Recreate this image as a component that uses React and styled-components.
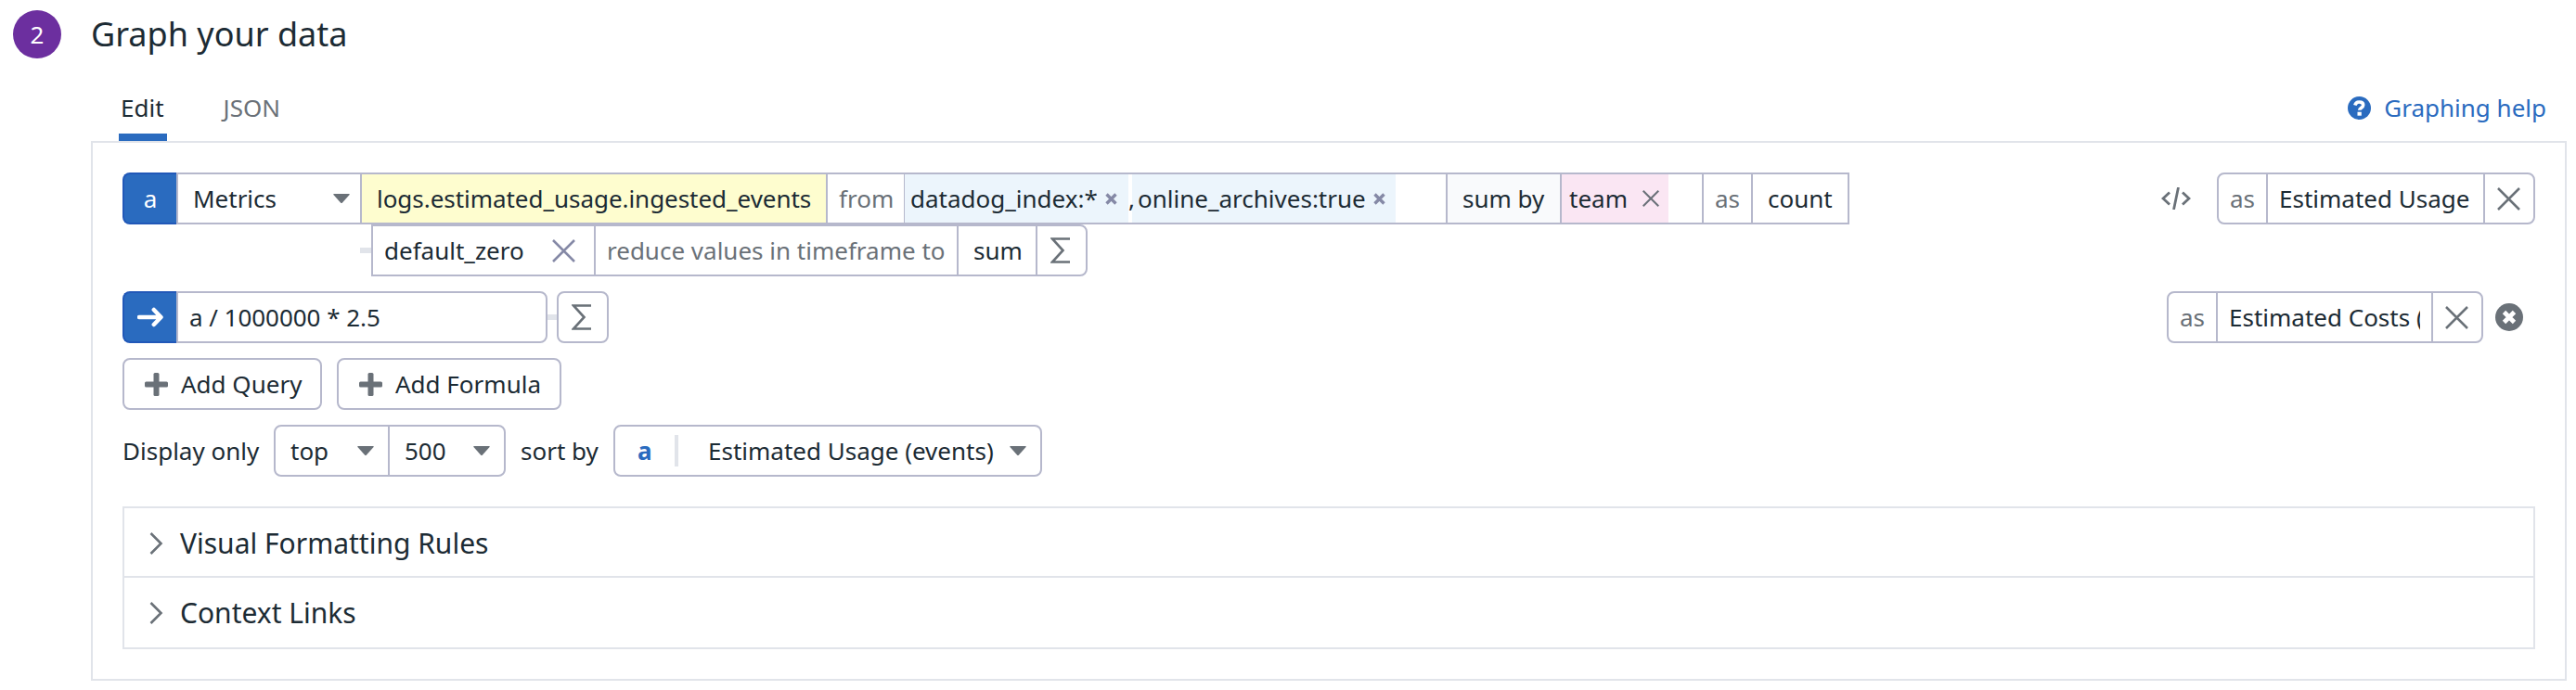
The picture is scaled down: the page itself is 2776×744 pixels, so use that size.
import React from "react";
import styled, { createGlobalStyle, css } from "styled-components";

const ink = "#1c2b34";
const muted = "#6a7178";
const line = "#b6b8cc";
const soft = "#e1e4ea";
const blue = "#2a6bbf";

const Global = createGlobalStyle`
  *, *::before, *::after { box-sizing: border-box; }
  body {
    margin: 0;
    background: #fff;
    color: ${ink};
    font: 26px/36px "Noto Sans", sans-serif;
    overflow: hidden;
  }
  svg { display: block; flex: none; }
`;

const Page = styled.main`
  width: 2776px;
  height: 744px;
  padding: 11px 10px 0 14px;
`;
const Heading = styled.header`
  display: flex;
  align-items: center;
  gap: 32px;
  height: 52px;
`;
const Step = styled.span`
  width: 52px;
  height: 52px;
  border-radius: 50%;
  background: #6c2f9f;
  color: #fff;
  text-align: center;
  line-height: 52px;
`;
const Title = styled.h1`
  margin: 0;
  font-size: 36px;
  line-height: 50px;
  font-weight: 400;
`;
const TabBar = styled.nav`
  display: flex;
  align-items: stretch;
  height: 89px;
  margin-left: 114px;
`;
const Tab = styled.span`
  display: flex;
  align-items: center;
  padding: 25px 3px 0 2px;
  margin-right: 59px;
  color: ${(p) => (p.$active ? ink : muted)};
  border-bottom: 8px solid ${(p) => (p.$active ? blue : "transparent")};
`;
const Help = styled.a`
  display: flex;
  align-items: center;
  gap: 14px;
  margin-left: auto;
  padding: 17px 22px 0 0;
  color: ${blue};
`;
const Panel = styled.section`
  width: 2668px;
  height: 582px;
  margin-left: 84px;
  padding: 32px;
  border: 2px solid ${soft};
`;
const Line = styled.div`
  display: flex;
  align-items: center;
  height: 56px;
  margin-top: ${(p) => p.$top || 0}px;
  padding-left: ${(p) => p.$indent || 0}px;
`;
const Push = styled.div`
  display: flex;
  align-items: center;
  margin-left: auto;
  padding-right: ${(p) => p.$end || 0}px;
`;
const Group = styled.div`
  display: flex;
  height: 56px;
  width: ${(p) => p.$w}px;
  border: 2px solid ${line};
  border-radius: ${(p) => p.$radius || "8px"};
  margin-left: ${(p) => p.$gap || 0}px;
`;
const Cell = styled.div`
  display: flex;
  align-items: center;
  flex: none;
  width: ${(p) => p.$w}px;
  padding-left: ${(p) => p.$pad || 0}px;
  color: ${(p) => (p.$muted ? muted : ink)};
  background: ${(p) => p.$bg || "transparent"};
  border-right: ${(p) => (p.$last ? 0 : p.$thin ? 1 : 2)}px solid ${line};
  white-space: pre;
  ${(p) => p.$tight && css`letter-spacing: -0.04px;`}
`;
const Chip = styled.span`
  display: flex;
  align-items: center;
  align-self: stretch;
  flex: none;
  width: ${(p) => p.$w}px;
  padding-left: ${(p) => p.$pad}px;
  background: ${(p) => p.$bg};
`;
const Comma = styled.span`
  width: 4px;
  z-index: 1;
`;
const Badge = styled.div`
  display: flex;
  align-items: center;
  justify-content: center;
  width: 58px;
  height: 56px;
  border: 2px solid #2158b8;
  border-right: 0;
  border-radius: 8px 0 0 8px;
  background: ${blue};
  color: #fff;
`;
const Label = styled.span`
  flex: none;
  width: ${(p) => p.$w}px;
  overflow: hidden;
  white-space: nowrap;
`;
const Link = styled.span`
  width: ${(p) => p.$w}px;
  height: 6px;
  background: ${soft};
`;
const Button = styled.button`
  display: flex;
  align-items: center;
  gap: 14px;
  width: ${(p) => p.$w}px;
  height: 56px;
  margin: 0 16px 0 0;
  padding: 0 0 0 22px;
  border: 2px solid ${line};
  border-radius: 8px;
  background: #fff;
  color: ${ink};
  font: inherit;
  white-space: nowrap;
`;
const Separator = styled.span`
  width: 4px;
  height: 34px;
  margin-right: 32px;
  background: ${soft};
`;
const Key = styled.b`
  width: 40px;
  color: ${blue};
`;
const Accordion = styled.div`
  margin-top: 32px;
  width: 2600px;
  border: 2px solid ${soft};
`;
const Section = styled.div`
  display: flex;
  align-items: center;
  gap: 18px;
  height: ${(p) => p.$h}px;
  padding: 2px 0 0 27px;
  font-size: 30px;
  & + & { border-top: 2px solid ${soft}; padding-top: 0; }
`;

const Caret = () => (
  <svg width="18" height="10" viewBox="0 0 18 10"><path d="M1 0h16q1.400 0 .6 1L10 9.400q-1 1-2 0L.4 1Q-.4 0 1 0z" fill={muted} /></svg>
);
const Cross = ({ size = 25, color = muted }) => (
  <svg width={size} height={size} viewBox="0 0 25 25"><path d="M1 1l23 23M24 1L1 24" stroke={color} strokeWidth={size < 20 ? 2.800 : 2.500} fill="none" /></svg>
);
const MiniCross = () => (
  <svg width="13" height="13" viewBox="0 0 13 13"><path d="M1.500 1.500l10 10M11.500 1.500l-10 10" stroke="#8589a6" strokeWidth="3.400" fill="none" /></svg>
);
const Sigma = () => (
  <svg width="22" height="28" viewBox="0 0 22 28"><path d="M21 1.500H2L13.500 14 2 26.500H21" stroke={muted} strokeWidth="2.600" fill="none" /></svg>
);
const Arrow = () => (
  <svg width="28" height="22" viewBox="0 0 28 22"><path d="M2 11H25M17.800 3L25.500 11l-7.700 8" stroke="#fff" strokeWidth="4.500" strokeLinecap="round" strokeLinejoin="round" fill="none" /></svg>
);
const Plus = () => (
  <svg width="25" height="25" viewBox="0 0 25 25">
    <rect x="9.500" y="0" width="6" height="25" rx="1.500" fill={muted} />
    <rect x="0" y="9.500" width="25" height="6" rx="1.500" fill={muted} />
  </svg>
);
const Chevron = () => (
  <svg width="15" height="24" viewBox="0 0 15 24"><path d="M1.500 1l11 11-11 11" stroke={muted} strokeWidth="2.600" fill="none" /></svg>
);
const Code = () => (
  <svg width="32" height="24" viewBox="0 0 32 24"><path d="M9 5.500L2 12l7 6.500M23 5.500l7 6.500-7 6.500M18.500 0l-5 24" stroke={muted} strokeWidth="2.800" fill="none" /></svg>
);
const HelpIcon = () => (
  <svg width="25" height="25" viewBox="0 0 25 25">
    <circle cx="12.500" cy="12.500" r="12.500" fill={blue} />
    <path d="M7.800 9.500C8.600 6.800 10.200 6 12.400 6c2.600 0 4.300 1.200 4.300 3.300 0 2.900-4 2.900-4 5.500" stroke="#fff" strokeWidth="3.600" fill="none" />
    <rect x="10.500" y="16.700" width="4.300" height="4" fill="#fff" />
  </svg>
);
const Remove = () => (
  <svg width="30" height="30" viewBox="0 0 30 30"><circle cx="15" cy="15" r="15" fill={muted} /><path d="M9.500 9.500l11 11M20.500 9.500l-11 11" stroke="#fff" strokeWidth="4.800" /></svg>
);

export default function App() {
  return (
    <Page>
      <Global />
      <Heading><Step>2</Step><Title>Graph your data</Title></Heading>
      <TabBar>
        <Tab $active>Edit</Tab>
        <Tab>JSON</Tab>
        <Help><HelpIcon />Graphing help</Help>
      </TabBar>
      <Panel>
        <Line>
          <Badge>a</Badge>
          <Group $w={1803} $radius="0">
            <Cell $w={198} $pad={16}><Label $w={151}>Metrics</Label><Caret /></Cell>
            <Cell $w={502} $pad={16} $bg="#fefdcf" $tight>logs.estimated_usage.ingested_events</Cell>
            <Cell $w={83} $pad={12} $thin $muted>from</Cell>
            <Cell $w={585}>
              <Chip $w={241} $pad={6} $bg="#ecf5fc"><Label $w={210}>datadog_index:*</Label><MiniCross /></Chip>
              <Comma>,</Comma>
              <Chip $w={284} $pad={6} $bg="#ecf5fc"><Label $w={254}>online_archives:true</Label><MiniCross /></Chip>
            </Cell>
            <Cell $w={123} $pad={16} $bg="#f9fafc">sum by</Cell>
            <Cell $w={153}><Chip $w={115} $pad={8} $bg="#fae6f3"><Label $w={79}>team</Label><Cross size={18} /></Chip></Cell>
            <Cell $w={53} $pad={12} $muted>as</Cell>
            <Cell $w={102} $pad={16} $last>count</Cell>
          </Group>
          <Push>
            <Code />
            <Group $w={343} $gap={28}>
              <Cell $w={53} $pad={12} $muted>as</Cell>
              <Cell $w={234} $pad={12}>Estimated Usage</Cell>
              <Cell $w={52} $pad={13} $last><Cross /></Cell>
            </Group>
          </Push>
        </Line>
        <Line $indent={256}>
          <Link $w={12} />
          <Group $w={772} $radius="0 8px 8px 0">
            <Cell $w={240} $pad={12}><Label $w={181}>default_zero</Label><Cross color="#8589a6" /></Cell>
            <Cell $w={391} $pad={12} $muted>reduce values in timeframe to</Cell>
            <Cell $w={85} $pad={16}>sum</Cell>
            <Cell $w={50} $pad={14} $last><Sigma /></Cell>
          </Group>
        </Line>
        <Line $top={16}>
          <Badge><Arrow /></Badge>
          <Group $w={400} $radius="0 8px 8px 0"><Cell $w={396} $pad={12} $last $tight>a / 1000000 * 2.5</Cell></Group>
          <Link $w={10} />
          <Group $w={56}><Cell $w={52} $pad={14} $last><Sigma /></Cell></Group>
          <Push $end={13}>
            <Group $w={341}>
              <Cell $w={53} $pad={12} $muted>as</Cell>
              <Cell $w={232} $pad={12}><Label $w={206}>Estimated Costs (</Label></Cell>
              <Cell $w={52} $pad={13} $last><Cross /></Cell>
            </Group>
            <Chip $w={43} $pad={13}><Remove /></Chip>
          </Push>
        </Line>
        <Line $top={16}>
          <Button $w={215}><Plus />Add Query</Button>
          <Button $w={242}><Plus />Add Formula</Button>
        </Line>
        <Line $top={16}>
          <Label $w={163}>Display only</Label>
          <Group $w={250}>
            <Cell $w={123} $pad={16}><Label $w={72}>top</Label><Caret /></Cell>
            <Cell $w={123} $pad={16} $last><Label $w={74}>500</Label><Caret /></Cell>
          </Group>
          <Chip $w={116} $pad={16}>sort by</Chip>
          <Group $w={462}>
            <Cell $w={458} $pad={24} $last>
              <Key>a</Key><Separator /><Label $w={325}>Estimated Usage (events)</Label><Caret />
            </Cell>
          </Group>
        </Line>
        <Accordion>
          <Section $h={73}><Chevron />Visual Formatting Rules</Section>
          <Section $h={77}><Chevron />Context Links</Section>
        </Accordion>
      </Panel>
    </Page>
  );
}
